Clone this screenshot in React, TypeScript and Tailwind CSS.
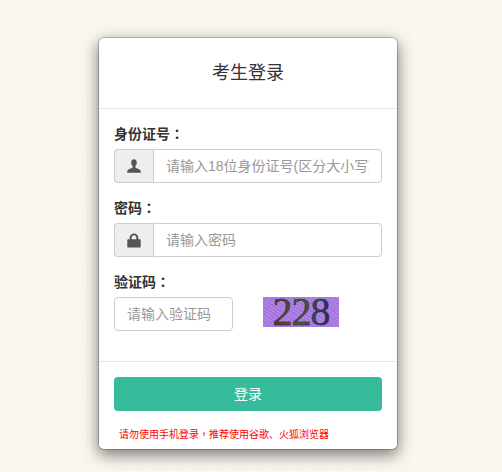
function UserIcon() {
  return (
    <svg viewBox="0 0 14 14" className="h-[14px] w-[14px] fill-[#555555]">
      <path d="M7 0.2C5.2 0.2 4.2 1.5 4.2 3.4c0 1.5.6 3 1.4 3.7v1.4C4.6 9.4 1.2 10 .5 11.6c-.2.6-.3 1.4-.3 2.2h13.6c0-.8-.1-1.6-.3-2.2-.7-1.6-4.1-2.2-5.1-3.1V7.1c.8-.7 1.4-2.2 1.4-3.7C9.8 1.5 8.8.2 7 .2z" />
    </svg>
  )
}

function LockIcon() {
  return (
    <svg viewBox="0 0 14 15" className="h-[15px] w-[14px] fill-[#555555]">
      <path d="M1.2 6.2h1.5V4.6C2.7 2.2 4.6.4 7 .4s4.3 1.8 4.3 4.2v1.6h1.5c.5 0 .9.4.9.9v6.6c0 .5-.4.9-.9.9H1.2c-.5 0-.9-.4-.9-.9V7.1c0-.5.4-.9.9-.9zM4.7 6.2h4.6V4.6c0-1.4-1-2.3-2.3-2.3s-2.3.9-2.3 2.3z" />
    </svg>
  )
}

function IconField({ icon, placeholder }: { icon: React.ReactNode; placeholder: string }) {
  return (
    <div className="flex h-[34px] w-full">
      <span className="flex w-[39px] shrink-0 items-center justify-center rounded-l border border-r-0 border-[#cccccc] bg-[#eeeeee]">
        {icon}
      </span>
      <input
        placeholder={placeholder}
        className="min-w-0 flex-1 rounded-r border border-[#cccccc] bg-white px-3 text-sm text-[#555555] placeholder:text-[#999999] focus:outline-none"
      />
    </div>
  )
}

function FieldLabel({ text, className }: { text: string; className?: string }) {
  return (
    <label className={`h-5 leading-[18px] font-bold ${className ?? ''}`}>
      {text}
      <span className="font-['Noto_Sans_CJK_TC',sans-serif]">：</span>
    </label>
  )
}

function Captcha() {
  return (
    <div className="flex h-[30px] w-[76px] items-center justify-center bg-[#a66ee6] bg-[repeating-linear-gradient(35deg,#bd98d8_0px,#a26aea_2px,#b08cd8_3px,#9c66e8_6px)]">
      <span className="bg-linear-to-r from-[#5a3428] via-[#4a5a34] to-[#262a5c] bg-clip-text font-['Liberation_Serif',serif] text-[40px] leading-[32px] tracking-[-1px] text-transparent [-webkit-text-stroke:0.4px_#2e2a44]">
        228
      </span>
    </div>
  )
}

export default function App() {
  return (
    <div className="h-[472px] w-[502px] overflow-hidden bg-[#faf7ee] bg-[repeating-linear-gradient(90deg,rgba(255,255,255,0.2)_0px,rgba(240,235,215,0.12)_2px,rgba(255,255,255,0.15)_5px),repeating-linear-gradient(0deg,rgba(255,255,255,0.2)_0px,rgba(240,235,215,0.12)_3px,rgba(255,255,255,0.15)_7px)] pt-[37px] pl-[98px] font-['Liberation_Sans','Noto_Sans_CJK_SC',sans-serif] text-sm text-[#333333]">
      <div className="flex h-[413px] w-[300px] flex-col rounded-md border border-black/20 bg-white bg-clip-padding shadow-[0_5px_15px_rgba(0,0,0,0.5)]">
        <div className="flex h-[71px] shrink-0 items-center justify-center border-b border-[#e5e5e5]">
          <h4 className="text-lg leading-none">考生登录</h4>
        </div>
        <div className="flex h-[253px] shrink-0 flex-col border-b border-[#e5e5e5] px-[15px] pt-[15px]">
          <FieldLabel text="身份证号" className="mb-[5px]" />
          <IconField icon={<UserIcon />} placeholder="请输入18位身份证号(区分大小写)" />
          <FieldLabel text="密码" className="mt-[15px] mb-[5px]" />
          <IconField icon={<LockIcon />} placeholder="请输入密码" />
          <FieldLabel text="验证码" className="mt-[15px] mb-[5px]" />
          <div className="flex items-start gap-[30px]">
            <input
              placeholder="请输入验证码"
              className="h-[34px] w-[119px] rounded border border-[#cccccc] bg-white px-3 text-sm placeholder:text-[#999999] focus:outline-none"
            />
            <Captcha />
          </div>
        </div>
        <div className="px-[15px] pt-[15px]">
          <button className="h-[34px] w-full rounded bg-[#36bc9b] text-sm text-white">登录</button>
          <p className="mt-4 pl-[5px] text-[10px] leading-[14px] text-[#ff0000]">
            请勿使用手机登录<span className="font-['Noto_Sans_CJK_TC',sans-serif]">，</span>推荐使用谷歌、火狐浏览器
          </p>
        </div>
      </div>
    </div>
  )
}
